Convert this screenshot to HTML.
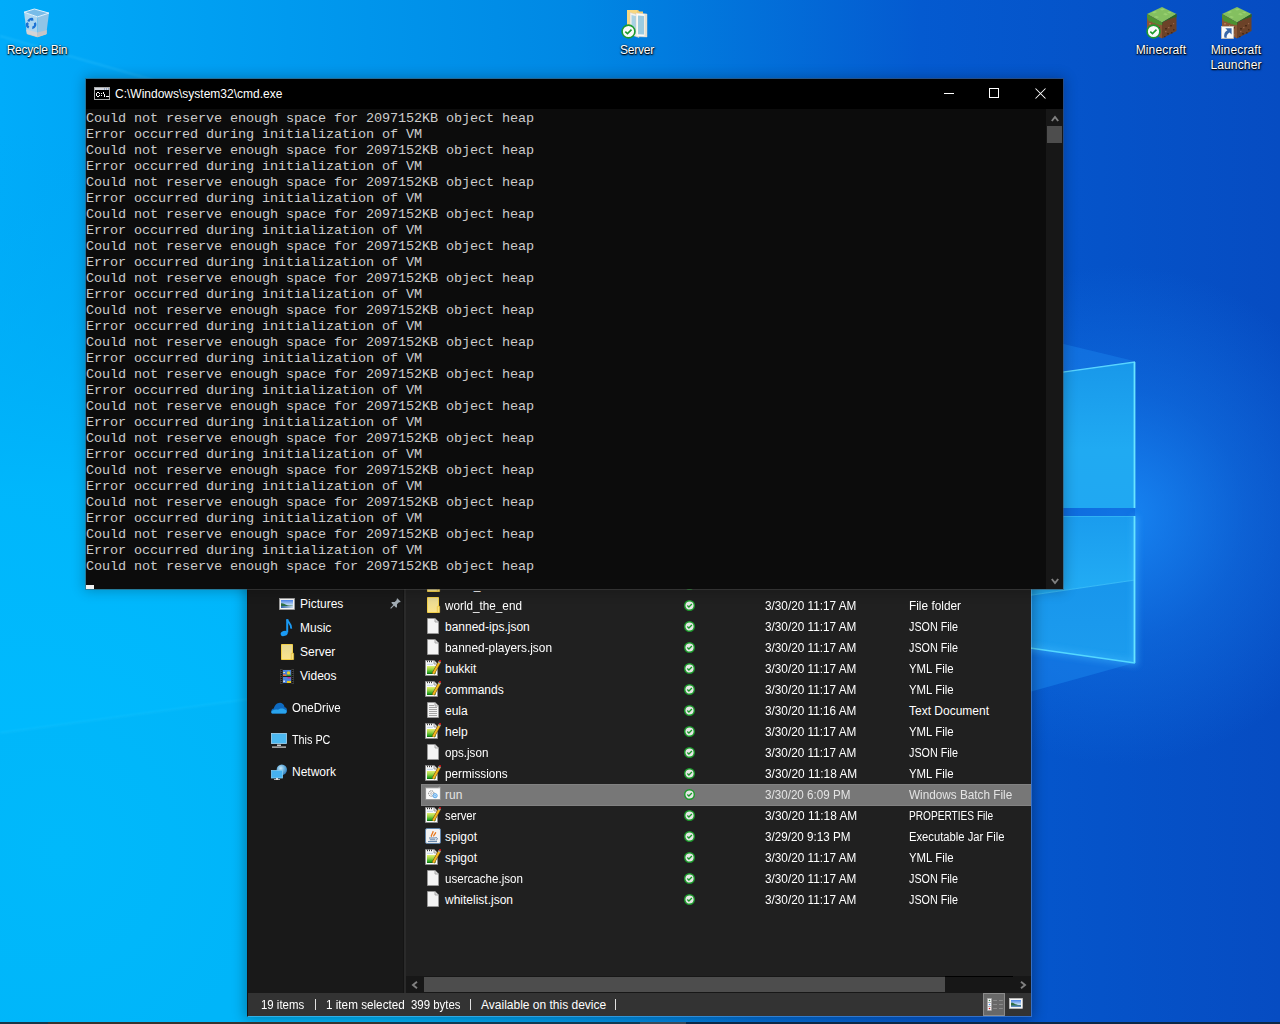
<!DOCTYPE html><html><head><meta charset="utf-8"><style>
*{margin:0;padding:0;box-sizing:border-box}
html,body{width:1280px;height:1024px;overflow:hidden;background:#0060d0}
body{position:relative;font-family:"Liberation Sans",sans-serif;font-size:12px}
svg{display:block}
.a{position:absolute}
.dt{position:absolute;color:#fff;font-size:12px;text-align:center;line-height:15px;white-space:nowrap;letter-spacing:-0.25px;
 text-shadow:0 1px 1px rgba(0,0,0,.95),1px 1px 2px rgba(0,0,0,.75),0 0 2px rgba(0,0,0,.6)}
#cmd{position:absolute;left:86px;top:79px;width:977px;height:510px;background:#0c0c0c;
 box-shadow:0 0 12px 2px rgba(0,0,0,.24)}
#cmdb{position:absolute;left:-1px;top:-1px;width:979px;height:512px;border:1px solid rgba(80,80,80,.45);pointer-events:none}
#cmdtitle{position:absolute;left:0;top:0;width:977px;height:30px;background:#000}
#cmdtitle .t{position:absolute;left:29px;top:8px;color:#fff;font-size:12px;line-height:14px;white-space:nowrap}
#con{position:absolute;left:0px;top:32px;width:960px;height:480px;color:#cccccc;
 font-family:"Liberation Mono",monospace;font-size:13.5px;letter-spacing:-0.1px;line-height:16px;white-space:pre}
#cur{position:absolute;left:0px;top:506px;width:8px;height:4px;background:#f2f2f2}
#vsb{position:absolute;left:960px;top:30px;width:17px;height:480px;background:#171717}
#exp{position:absolute;left:247px;top:560px;width:785px;height:457px;background:transparent;
 box-shadow:0 0 12px 2px rgba(0,0,0,.30)}
#expb{position:absolute;left:0;top:0;width:785px;height:457px;border:1px solid rgba(150,165,190,.32);border-left:1px solid #141212;border-top:0;pointer-events:none}
#cont{position:absolute;left:159px;top:0;width:625px;height:433px;background:#202020}
#nav{position:absolute;left:1px;top:0;width:155px;height:433px;background:#191919}
#split1{position:absolute;left:156px;top:0;width:1px;height:433px;background:#141414}
#split2{position:absolute;left:157px;top:0;width:2px;height:433px;background:#2a2a2a}
.nv{position:absolute;color:#fff;font-size:12px;line-height:14px;white-space:nowrap}
.row{position:absolute;left:174px;width:610px;height:21px;color:#fff;white-space:nowrap;font-size:12px;line-height:14px}
.row .n{position:absolute;left:24px;top:4px}
.row .d{position:absolute;left:344px;top:4px}
.row .ty{position:absolute;left:488px;top:4px}
.row .ck{position:absolute;left:263px;top:5px}
.row .ic{position:absolute;left:4px;top:2px}
.sel{height:22px;color:#e4e4e4;background:#777777;box-shadow:inset 0 1px 0 #828282,inset 0 -1px 0 #828282,inset 1px 0 0 #828282}
#hsb{position:absolute;left:159px;top:416px;width:625px;height:17px;background:#171717}
#status{position:absolute;left:1px;top:433px;width:783px;height:23px;background:#333333;color:#fff;white-space:nowrap;line-height:14px}
#status .s{position:absolute;top:5px}
#status .bar{position:absolute;top:6px;width:1px;height:11px;background:#e0e0e0}
</style></head><body>
<svg class="a" style="left:0;top:0" width="1280" height="1024" viewBox="0 0 1280 1024">
 <defs>
  <linearGradient id="g0" x1="0" y1="0" x2="1280" y2="0" gradientUnits="userSpaceOnUse">
   <stop offset="0" stop-color="#00acfa"/>
   <stop offset="0.45" stop-color="#0088e4"/>
   <stop offset="0.72" stop-color="#045ad0"/>
   <stop offset="1" stop-color="#064cc2"/>
  </linearGradient>
  <radialGradient id="g1" cx="60" cy="850" r="720" gradientUnits="userSpaceOnUse">
   <stop offset="0" stop-color="#00bcfe" stop-opacity="1"/>
   <stop offset="0.5" stop-color="#00b8fc" stop-opacity="0.9"/>
   <stop offset="1" stop-color="#00a8f0" stop-opacity="0"/>
  </radialGradient>
  <radialGradient id="g2" cx="1120" cy="515" r="250" gradientUnits="userSpaceOnUse">
   <stop offset="0" stop-color="#1a8efa" stop-opacity="0.85"/>
   <stop offset="0.5" stop-color="#1a86f4" stop-opacity="0.35"/>
   <stop offset="1" stop-color="#1a80f0" stop-opacity="0"/>
  </radialGradient>
  <filter id="blur1" x="-10%" y="-50%" width="120%" height="200%"><feGaussianBlur stdDeviation="1"/></filter>
  <filter id="blur3" x="-50%" y="-50%" width="200%" height="200%"><feGaussianBlur stdDeviation="3"/></filter>
  <linearGradient id="pane" x1="0" y1="362" x2="0" y2="508" gradientUnits="userSpaceOnUse">
   <stop offset="0" stop-color="#1898ea"/>
   <stop offset="0.6" stop-color="#20aaf2"/>
   <stop offset="1" stop-color="#20a8f2"/>
  </linearGradient>
  <linearGradient id="pane2" x1="0" y1="516" x2="0" y2="590" gradientUnits="userSpaceOnUse">
   <stop offset="0" stop-color="#1a9cee"/>
   <stop offset="1" stop-color="#22acf4"/>
  </linearGradient>
  <linearGradient id="pane3" x1="0" y1="585" x2="0" y2="660" gradientUnits="userSpaceOnUse">
   <stop offset="0" stop-color="#1896ec"/>
   <stop offset="1" stop-color="#1c9cee"/>
  </linearGradient>
 </defs>
 <rect width="1280" height="1024" fill="url(#g0)"/>
 <rect width="1280" height="1024" fill="url(#g1)"/>
 <rect width="1280" height="1024" fill="url(#g2)"/>
 <line x1="0" y1="36" x2="160" y2="82" stroke="#50d0ff" stroke-width="1.5" opacity="0.3" filter="url(#blur1)"/>
 <polygon points="0,733 250,699 250,1024 0,1024" fill="#00aef0" opacity="0.18"/>
 <line x1="0" y1="733" x2="250" y2="699" stroke="#30d0ff" stroke-width="1.5" opacity="0.25" filter="url(#blur1)"/>
 <polygon points="1134,361 800,280 800,409" fill="#1a86ee" opacity="0.45"/>
 <polygon points="1134,663 800,756 800,615" fill="#1a88ee" opacity="0.5"/>
 <polygon points="1135,362 800,409 800,508 1135,508" fill="url(#pane)"/>
 <polygon points="1135,508 800,508 800,516 1135,516" fill="#0a62d6" opacity="0.5"/>
 <polygon points="1135,516 800,516 800,629 1135,580" fill="url(#pane2)"/>
 <polygon points="1135,580 800,629 800,615 1135,663" fill="url(#pane3)"/>
 <line x1="1135" y1="580" x2="800" y2="629" stroke="#40c4fa" stroke-width="1" opacity="0.8"/>
 <polyline points="800,409 1135,362" fill="none" stroke="#58d4ff" stroke-width="1.3"/>
 <polyline points="1135,362 1135,508" fill="none" stroke="#40b8ff" stroke-width="5" opacity="0.55" filter="url(#blur3)"/>
 <polyline points="1135,516 1135,663 800,615" fill="none" stroke="#40b8ff" stroke-width="5" opacity="0.55" filter="url(#blur3)"/>
 <line x1="1134.5" y1="362" x2="1134.5" y2="508" stroke="#68e4ff" stroke-width="1.8"/>
 <line x1="800" y1="516.5" x2="1135" y2="516.5" stroke="#40c0f8" stroke-width="1" opacity="0.6"/>
 <line x1="1134.5" y1="516" x2="1134.5" y2="663" stroke="#68e4ff" stroke-width="1.8"/>
 <line x1="1135" y1="663" x2="800" y2="615" stroke="#54d8ff" stroke-width="1.5"/>
</svg>
<div class="a" style="left:0;top:0"><svg width="74" height="40" viewBox="0 0 74 40" ><path d="M24 12.2L37.5 16.9V36.9L26.9 33.8z" fill="#acd6f0"/>
<path d="M37.5 16.9L49 13.1L46.3 34L37.5 36.9z" fill="#90c4e6"/>
<path d="M24 12.2L34.4 9L49 13.1L37.5 16.9z" fill="#78bce8" stroke="#e4f2fb" stroke-width="1"/>
<path d="M26.1 29.5L37.5 32.5V36.9L26.9 33.8z" fill="#d4d4d6"/>
<path d="M37.5 32.5L46.8 30V34L37.5 36.9z" fill="#c4c4c8"/>
<path d="M26.9 33.8L37.5 36.9L46.3 34" fill="none" stroke="#e8c8b0" stroke-width="0.6"/>
<path d="M28.3 21.5c0.8-2.2 2.8-3 4.6-2.3" stroke="#1a72d4" stroke-width="2.3" fill="none"/>
<path d="M32.2 17.6l1.6 2.6l-2.8 0.8z" fill="#1a72d4"/>
<path d="M28.8 27.5c-1.6-0.8-2.2-2.6-1.6-4.4" stroke="#1a72d4" stroke-width="2.3" fill="none"/>
<path d="M26 24.5l1.3-2.6l1.8 2.4z" fill="#1a72d4"/>
<path d="M34.8 22.8c0.9 1.8 0.4 3.8-1.6 4.8" stroke="#1a72d4" stroke-width="2.3" fill="none"/>
<path d="M32.2 29.2l0.2-3l2.5 1.3z" fill="#1a72d4"/></svg></div>
<div class="dt" style="left:0;top:43px;width:74px">Recycle Bin</div>
<div class="a" style="left:600px;top:0"><svg width="74" height="40" viewBox="0 0 74 40" ><path d="M27 10h11l1.5 1.5H43V30H27z" fill="#f2cc6c"/>
<path d="M27 10h10v20H27z" fill="#f8d880"/>
<path d="M30 12.5l9 2.5v22.5l-9-3z" fill="#f6f4ee" stroke="#d0c8b8" stroke-width="0.5"/>
<path d="M31.5 15l6 1.6v18l-6-2z" fill="#a8d2e4"/>
<path d="M36 13l11 1v23l-11-0.5z" fill="#fbfaf6" stroke="#d4ccbc" stroke-width="0.5"/>
<path d="M38 15.5l6 0.5v18.5l-6-0.3z" fill="#9ccbe0"/>
<path d="M44.5 14.2l2.5-0.2v23l-2.5-0.2z" fill="#e6dfcf"/></svg></div>
<div class="a" style="left:621px;top:24px"><svg width="15" height="15" viewBox="0 0 15 15" ><circle cx="7.5" cy="7.5" r="6.4" fill="#fafafa" stroke="#1e9a2e" stroke-width="1.6"/><path d="M4.3 7.6l2.2 2l4-4" fill="none" stroke="#1e9a2e" stroke-width="1.6"/></svg></div>
<div class="dt" style="left:600px;top:43px;width:74px">Server</div>
<div class="a" style="left:1146px;top:6px"><svg width="32" height="33" viewBox="0 0 32 33" ><path d="M16 1L30.5 8L16 16.5L1 8z" fill="#84c060"/>
<path d="M6 6.5l3-1.5l2 1l-3 1.5zM14 3.5l3-1l2 1l-3 1zM19 7l3 1.2l-2 1.2l-3-1.2zM10 10l3 1l-2 1l-3-1zM23 5.5l2.5 1l-2 1l-2.5-1z" fill="#98d070"/>
<path d="M1 8L16 16.5V32.5L1 25z" fill="#8a5636"/>
<path d="M30.5 8L16 16.5V32.5L30.5 25z" fill="#6c4228"/>
<path d="M1 8L16 16.5V19.5l-1.5-1l-1.2 0.8l-1.8-1.4l-1 0.5l-2-1.6l-1.2 0.4l-1.8-1.6l-1 0.4l-2.2-1.6L1 11z" fill="#4c9232"/>
<path d="M16 16.5L30.5 8V11l-1.5 0.6l-1-0.4l-1.8 1.4l-1-0.3l-2 1.5l-1.3-0.2l-1.8 1.5l-1-0.2l-2.4 1.6L16 19.5z" fill="#246c22"/>
<path d="M3 17h2v1.5H3zM7 21h2v1.5H7zM4 23h1.5v1.5H4zM11 24h2v1.5h-2zM12 28h1.5v1.5H12zM8 19h1v1H8z" fill="#b07a50"/>
<path d="M5 20h1.5v1.5H5zM9 25h1.5v1.5H9zM13 21h1v1.5h-1zM2 21h1v1H2z" fill="#5a3420"/>
<path d="M19 22h2v1.5h-2zM24 19h2v1.5h-2zM27 23h1.5v1.5H27zM21 27h2v1.5h-2zM25 26h1.5v1.5H25zM18 30h1.5v1.2H18z" fill="#4a2a18"/>
<path d="M22 21h1.5v1.2H22zM19 25h1.5v1.2H19zM27 17h1.2v1.2H27z" fill="#94644a"/></svg></div>
<div class="a" style="left:1146px;top:24px"><svg width="15" height="15" viewBox="0 0 15 15" ><circle cx="7.5" cy="7.5" r="6.4" fill="#fafafa" stroke="#1e9a2e" stroke-width="1.6"/><path d="M4.3 7.6l2.2 2l4-4" fill="none" stroke="#1e9a2e" stroke-width="1.6"/></svg></div>
<div class="dt" style="left:1124px;top:43px;width:74px;letter-spacing:0.15px">Minecraft</div>
<div class="a" style="left:1221px;top:6px"><svg width="32" height="33" viewBox="0 0 32 33" ><path d="M16 1L30.5 8L16 16.5L1 8z" fill="#84c060"/>
<path d="M6 6.5l3-1.5l2 1l-3 1.5zM14 3.5l3-1l2 1l-3 1zM19 7l3 1.2l-2 1.2l-3-1.2zM10 10l3 1l-2 1l-3-1zM23 5.5l2.5 1l-2 1l-2.5-1z" fill="#98d070"/>
<path d="M1 8L16 16.5V32.5L1 25z" fill="#8a5636"/>
<path d="M30.5 8L16 16.5V32.5L30.5 25z" fill="#6c4228"/>
<path d="M1 8L16 16.5V19.5l-1.5-1l-1.2 0.8l-1.8-1.4l-1 0.5l-2-1.6l-1.2 0.4l-1.8-1.6l-1 0.4l-2.2-1.6L1 11z" fill="#4c9232"/>
<path d="M16 16.5L30.5 8V11l-1.5 0.6l-1-0.4l-1.8 1.4l-1-0.3l-2 1.5l-1.3-0.2l-1.8 1.5l-1-0.2l-2.4 1.6L16 19.5z" fill="#246c22"/>
<path d="M3 17h2v1.5H3zM7 21h2v1.5H7zM4 23h1.5v1.5H4zM11 24h2v1.5h-2zM12 28h1.5v1.5H12zM8 19h1v1H8z" fill="#b07a50"/>
<path d="M5 20h1.5v1.5H5zM9 25h1.5v1.5H9zM13 21h1v1.5h-1zM2 21h1v1H2z" fill="#5a3420"/>
<path d="M19 22h2v1.5h-2zM24 19h2v1.5h-2zM27 23h1.5v1.5H27zM21 27h2v1.5h-2zM25 26h1.5v1.5H25zM18 30h1.5v1.2H18z" fill="#4a2a18"/>
<path d="M22 21h1.5v1.2H22zM19 25h1.5v1.2H19zM27 17h1.2v1.2H27z" fill="#94644a"/></svg></div>
<div class="a" style="left:1221px;top:26px"><svg width="13" height="13" viewBox="0 0 13 13" ><rect x="0.5" y="0.5" width="12" height="12" fill="#fafafa" stroke="#c8c0b4" stroke-width="0.8"/><path d="M4.3 2.2H10.6V8.4L8.6 6.4C6.4 7.6 5.4 9.2 5.6 11.9L3.3 11.6C2.7 8.2 3.8 5.6 6.4 4.3z" fill="#3a68a8"/></svg></div>
<div class="dt" style="left:1199px;top:43px;width:74px;letter-spacing:0.15px">Minecraft<br>Launcher</div>
<div id="exp">
<div id="cont"></div><div id="nav"></div><div id="split1"></div><div id="split2"></div>
<div class="a" style="left:32px;top:36px"><svg width="16" height="16" viewBox="0 0 16 16" ><defs><linearGradient id="sky" x1="0" y1="0" x2="0" y2="1"><stop offset="0" stop-color="#4a84e8"/><stop offset="0.7" stop-color="#d4e8f6"/></linearGradient><linearGradient id="wat" x1="0" y1="0" x2="1" y2="0"><stop offset="0" stop-color="#2e64a8"/><stop offset="1" stop-color="#c8dcec"/></linearGradient></defs><rect x="0.5" y="2.5" width="15" height="11" fill="#f4f4f4" stroke="#a0a0a0" stroke-width="0.8"/><rect x="2" y="4" width="12" height="8" fill="url(#sky)"/><path d="M2 7.2c2-0.3 3.5 0.5 5 1.6c2 0.8 4 0.8 7 1V10.5H2z" fill="#2e6e44"/><rect x="2" y="10" width="12" height="2" fill="url(#wat)"/></svg></div>
<div class="nv" style="left:53px;top:37px;">Pictures</div>
<div class="a" style="left:32px;top:58px"><svg width="16" height="19" viewBox="0 0 16 19" ><path d="M8.2 1.2v13.3" stroke="#1a9af4" stroke-width="2"/><ellipse cx="5.2" cy="15.4" rx="3.6" ry="2.5" transform="rotate(-20 5.2 15.4)" fill="#1a9af4"/><path d="M8.2 1.5c0.6 3.2 4.5 4 4 9.2" stroke="#1a9af4" stroke-width="2" fill="none"/></svg></div>
<div class="nv" style="left:53px;top:61px;">Music</div>
<div class="a" style="left:32px;top:84px"><svg width="16" height="16" viewBox="0 0 16 16" ><defs><linearGradient id="fg" x1="0" y1="0" x2="0" y2="1"><stop offset="0" stop-color="#e6d894"/><stop offset="1" stop-color="#fae48c"/></linearGradient></defs><path d="M2.5 0.5h11v15h-11z" fill="url(#fg)" stroke="#f2cf48" stroke-width="1"/><path d="M12.3 9.3h2.3v6.2h-2.3z" fill="#fae27c" stroke="#e8c444" stroke-width="0.8"/></svg></div>
<div class="nv" style="left:53px;top:85px;">Server</div>
<div class="a" style="left:32px;top:108px"><svg width="16" height="17" viewBox="0 0 16 17" ><rect x="1" y="1" width="14" height="15" fill="#202020"/><rect x="1" y="1" width="2.5" height="15" fill="#3e3e3e"/><rect x="12.5" y="1" width="2.5" height="15" fill="#3e3e3e"/><g fill="#0a0a0a"><rect x="1.7" y="2" width="1.2" height="1"/><rect x="1.7" y="4" width="1.2" height="1"/><rect x="1.7" y="6" width="1.2" height="1"/><rect x="1.7" y="8" width="1.2" height="1"/><rect x="1.7" y="10" width="1.2" height="1"/><rect x="1.7" y="12" width="1.2" height="1"/><rect x="1.7" y="14" width="1.2" height="1"/><rect x="13.1" y="2" width="1.2" height="1"/><rect x="13.1" y="4" width="1.2" height="1"/><rect x="13.1" y="6" width="1.2" height="1"/><rect x="13.1" y="8" width="1.2" height="1"/><rect x="13.1" y="10" width="1.2" height="1"/><rect x="13.1" y="12" width="1.2" height="1"/><rect x="13.1" y="14" width="1.2" height="1"/></g><rect x="4" y="2" width="8" height="6" fill="#4a82dc"/><rect x="4" y="9" width="8" height="6" fill="#4a82dc"/><circle cx="9.6" cy="5" r="1.7" fill="#e8d020"/><rect x="4" y="6.5" width="3.5" height="1.5" fill="#f06a30"/><rect x="7.5" y="6.8" width="4.5" height="1.2" fill="#2a9a3a"/><rect x="4.2" y="4" width="1.8" height="1" fill="#e0e0a0"/><rect x="8" y="13" width="4" height="2" fill="#e8c818"/><rect x="8.5" y="9" width="3" height="1.5" fill="#c02a9a"/><rect x="4.2" y="12.5" width="1.8" height="1.5" fill="#d8e0e8"/></svg></div>
<div class="nv" style="left:53px;top:109px;">Videos</div>
<div class="a" style="left:24px;top:142px"><svg width="16" height="12" viewBox="0 0 16 12" ><path d="M1.5 11.5C-0.5 11.3-0.2 6.8 2.8 6.6C3.4 3.6 5.8 0.6 9.2 0.7C11.8 0.9 13.2 2.8 13.6 5.3C15.6 5.5 16.4 7.8 15.9 9.4C15.6 10.8 14.6 11.5 13.6 11.5z" fill="#0e6ac0"/><path d="M1.5 11.5C0 11.4-0.2 9.2 1.6 8.4C3.2 7.6 5.2 7.4 7 7.8C9 6.2 12.2 6 14.2 7.8C15.8 8.4 16.2 10.6 14.6 11.5z" fill="#29a3ec"/></svg></div>
<div class="nv" style="left:45px;top:141px;transform:scaleX(0.96);transform-origin:0 0;">OneDrive</div>
<div class="a" style="left:24px;top:172px"><svg width="16" height="16" viewBox="0 0 16 16" ><rect x="0.5" y="1.5" width="15" height="10" fill="#4cb8f0" stroke="#a8d8f4" stroke-width="0.8"/><path d="M6 12.5h4v1.5H6z" fill="#c8c8c8"/><path d="M1 14.5h14v1.2H1z" fill="#d8d8d8"/></svg></div>
<div class="nv" style="left:45px;top:173px;transform:scaleX(0.9);transform-origin:0 0;">This PC</div>
<div class="a" style="left:24px;top:204px"><svg width="16" height="16" viewBox="0 0 16 16" ><defs><radialGradient id="gl" cx="0.4" cy="0.35" r="0.7"><stop offset="0" stop-color="#c8e8f8"/><stop offset="0.5" stop-color="#6ab0dc"/><stop offset="1" stop-color="#2a78b8"/></radialGradient></defs><circle cx="10.8" cy="5.8" r="5.2" fill="url(#gl)"/><rect x="0.5" y="6.5" width="11" height="7.5" fill="#46b2f0" stroke="#80ccf4" stroke-width="0.8"/><path d="M5 14h2v1.2H5zM3 15.2h6v0.8H3z" fill="#d8d8d8"/></svg></div>
<div class="nv" style="left:45px;top:205px;">Network</div>
<div class="a" style="left:142px;top:38px"><svg width="12" height="12" viewBox="0 0 12 12" ><g transform="rotate(45 6 6)" fill="#a2acb4"><path d="M3.6 0.3h4.8v1.3h-0.8v3.2l1.9 1.9v1.1h-7v-1.1l1.9-1.9v-3.2h-0.8z"/><rect x="5.5" y="7.6" width="1" height="4.6"/></g></svg></div>
<div class="row" style="top:14px"><div class="ic"><svg width="16" height="16" viewBox="0 0 16 16" ><defs><linearGradient id="fg" x1="0" y1="0" x2="0" y2="1"><stop offset="0" stop-color="#e6d894"/><stop offset="1" stop-color="#fae48c"/></linearGradient></defs><path d="M2.5 0.5h11v15h-11z" fill="url(#fg)" stroke="#f2cf48" stroke-width="1"/><path d="M12.3 9.3h2.3v6.2h-2.3z" fill="#fae27c" stroke="#e8c444" stroke-width="0.8"/></svg></div><span class="n" style="">world_nether</span><div class="ck"><svg width="11" height="11" viewBox="0 0 11 11" ><circle cx="5.5" cy="5.5" r="4.8" fill="#e6e6e6" stroke="#1a9a2a" stroke-width="1.4"/><path d="M3.3 5.6l1.6 1.4l3-3" fill="none" stroke="#1a9a2a" stroke-width="1.3"/></svg></div><span class="d" style="transform:scaleX(0.98);transform-origin:0 0;">3/30/20 11:17 AM</span><span class="ty" style="transform:scaleX(0.987);transform-origin:0 0;">File folder</span></div>
<div class="row" style="top:35px"><div class="ic"><svg width="16" height="16" viewBox="0 0 16 16" ><defs><linearGradient id="fg" x1="0" y1="0" x2="0" y2="1"><stop offset="0" stop-color="#e6d894"/><stop offset="1" stop-color="#fae48c"/></linearGradient></defs><path d="M2.5 0.5h11v15h-11z" fill="url(#fg)" stroke="#f2cf48" stroke-width="1"/><path d="M12.3 9.3h2.3v6.2h-2.3z" fill="#fae27c" stroke="#e8c444" stroke-width="0.8"/></svg></div><span class="n" style="transform:scaleX(0.977);transform-origin:0 0;">world_the_end</span><div class="ck"><svg width="11" height="11" viewBox="0 0 11 11" ><circle cx="5.5" cy="5.5" r="4.8" fill="#e6e6e6" stroke="#1a9a2a" stroke-width="1.4"/><path d="M3.3 5.6l1.6 1.4l3-3" fill="none" stroke="#1a9a2a" stroke-width="1.3"/></svg></div><span class="d" style="transform:scaleX(0.98);transform-origin:0 0;">3/30/20 11:17 AM</span><span class="ty" style="transform:scaleX(0.987);transform-origin:0 0;">File folder</span></div>
<div class="row" style="top:56px"><div class="ic"><svg width="16" height="16" viewBox="0 0 16 16" ><path d="M2.5 0.5h7.5l3.5 3.5v11.5h-11z" fill="#f4f4f4" stroke="#9a9a9a" stroke-width="0.8"/><path d="M10 0.5v3.5h3.5" fill="#e0e0e0" stroke="#9a9a9a" stroke-width="0.8"/></svg></div><span class="n" style="">banned-ips.json</span><div class="ck"><svg width="11" height="11" viewBox="0 0 11 11" ><circle cx="5.5" cy="5.5" r="4.8" fill="#e6e6e6" stroke="#1a9a2a" stroke-width="1.4"/><path d="M3.3 5.6l1.6 1.4l3-3" fill="none" stroke="#1a9a2a" stroke-width="1.3"/></svg></div><span class="d" style="transform:scaleX(0.98);transform-origin:0 0;">3/30/20 11:17 AM</span><span class="ty" style="transform:scaleX(0.896);transform-origin:0 0;">JSON File</span></div>
<div class="row" style="top:77px"><div class="ic"><svg width="16" height="16" viewBox="0 0 16 16" ><path d="M2.5 0.5h7.5l3.5 3.5v11.5h-11z" fill="#f4f4f4" stroke="#9a9a9a" stroke-width="0.8"/><path d="M10 0.5v3.5h3.5" fill="#e0e0e0" stroke="#9a9a9a" stroke-width="0.8"/></svg></div><span class="n" style="transform:scaleX(0.99);transform-origin:0 0;">banned-players.json</span><div class="ck"><svg width="11" height="11" viewBox="0 0 11 11" ><circle cx="5.5" cy="5.5" r="4.8" fill="#e6e6e6" stroke="#1a9a2a" stroke-width="1.4"/><path d="M3.3 5.6l1.6 1.4l3-3" fill="none" stroke="#1a9a2a" stroke-width="1.3"/></svg></div><span class="d" style="transform:scaleX(0.98);transform-origin:0 0;">3/30/20 11:17 AM</span><span class="ty" style="transform:scaleX(0.896);transform-origin:0 0;">JSON File</span></div>
<div class="row" style="top:98px"><div class="ic"><svg width="16" height="16" viewBox="0 0 16 16" ><defs><linearGradient id="ng" x1="0" y1="0" x2="0" y2="1"><stop offset="0" stop-color="#e4f070"/><stop offset="0.45" stop-color="#90d040"/><stop offset="0.85" stop-color="#20a020"/><stop offset="1" stop-color="#0a5a0a"/></linearGradient></defs><path d="M0.5 0.5H9L12.5 4V15.5H0.5z" fill="#fafafa" stroke="#8c8c8c" stroke-width="0.9"/><path d="M9 0.5V4H12.5" fill="#e4e4e4" stroke="#8c8c8c" stroke-width="0.8"/><rect x="2" y="0.6" width="1" height="1.6" fill="#3a3a3a"/><rect x="4" y="0.6" width="1" height="1.6" fill="#3a3a3a"/><rect x="6" y="0.6" width="1" height="1.6" fill="#3a3a3a"/><path d="M2 4.3h6" stroke="#a8c4e0" stroke-width="0.7"/><rect x="2" y="6" width="8.5" height="8" fill="url(#ng)"/><path d="M8.2 13.8L14.6 2" stroke="#6a4a10" stroke-width="3"/><path d="M8.2 13.8L14.6 2" stroke="#f4b820" stroke-width="2"/><path d="M14 3L15.2 0.9" stroke="#98a8b8" stroke-width="2.2"/><circle cx="15.1" cy="0.9" r="1" fill="#c81010"/></svg></div><span class="n" style="">bukkit</span><div class="ck"><svg width="11" height="11" viewBox="0 0 11 11" ><circle cx="5.5" cy="5.5" r="4.8" fill="#e6e6e6" stroke="#1a9a2a" stroke-width="1.4"/><path d="M3.3 5.6l1.6 1.4l3-3" fill="none" stroke="#1a9a2a" stroke-width="1.3"/></svg></div><span class="d" style="transform:scaleX(0.98);transform-origin:0 0;">3/30/20 11:17 AM</span><span class="ty" style="transform:scaleX(0.95);transform-origin:0 0;">YML File</span></div>
<div class="row" style="top:119px"><div class="ic"><svg width="16" height="16" viewBox="0 0 16 16" ><defs><linearGradient id="ng" x1="0" y1="0" x2="0" y2="1"><stop offset="0" stop-color="#e4f070"/><stop offset="0.45" stop-color="#90d040"/><stop offset="0.85" stop-color="#20a020"/><stop offset="1" stop-color="#0a5a0a"/></linearGradient></defs><path d="M0.5 0.5H9L12.5 4V15.5H0.5z" fill="#fafafa" stroke="#8c8c8c" stroke-width="0.9"/><path d="M9 0.5V4H12.5" fill="#e4e4e4" stroke="#8c8c8c" stroke-width="0.8"/><rect x="2" y="0.6" width="1" height="1.6" fill="#3a3a3a"/><rect x="4" y="0.6" width="1" height="1.6" fill="#3a3a3a"/><rect x="6" y="0.6" width="1" height="1.6" fill="#3a3a3a"/><path d="M2 4.3h6" stroke="#a8c4e0" stroke-width="0.7"/><rect x="2" y="6" width="8.5" height="8" fill="url(#ng)"/><path d="M8.2 13.8L14.6 2" stroke="#6a4a10" stroke-width="3"/><path d="M8.2 13.8L14.6 2" stroke="#f4b820" stroke-width="2"/><path d="M14 3L15.2 0.9" stroke="#98a8b8" stroke-width="2.2"/><circle cx="15.1" cy="0.9" r="1" fill="#c81010"/></svg></div><span class="n" style="">commands</span><div class="ck"><svg width="11" height="11" viewBox="0 0 11 11" ><circle cx="5.5" cy="5.5" r="4.8" fill="#e6e6e6" stroke="#1a9a2a" stroke-width="1.4"/><path d="M3.3 5.6l1.6 1.4l3-3" fill="none" stroke="#1a9a2a" stroke-width="1.3"/></svg></div><span class="d" style="transform:scaleX(0.98);transform-origin:0 0;">3/30/20 11:17 AM</span><span class="ty" style="transform:scaleX(0.95);transform-origin:0 0;">YML File</span></div>
<div class="row" style="top:140px"><div class="ic"><svg width="16" height="16" viewBox="0 0 16 16" ><path d="M2.5 0.5h7.5l3.5 3.5v11.5h-11z" fill="#f4f4f4" stroke="#9a9a9a" stroke-width="0.8"/><path d="M10 0.5v3.5h3.5" fill="#e0e0e0" stroke="#9a9a9a" stroke-width="0.8"/><path d="M4 3.5h5M4 5.5h8M4 7.5h8M4 9.5h8M4 11.5h8M4 13.5h8" stroke="#9a9a9a" stroke-width="0.9"/></svg></div><span class="n" style="">eula</span><div class="ck"><svg width="11" height="11" viewBox="0 0 11 11" ><circle cx="5.5" cy="5.5" r="4.8" fill="#e6e6e6" stroke="#1a9a2a" stroke-width="1.4"/><path d="M3.3 5.6l1.6 1.4l3-3" fill="none" stroke="#1a9a2a" stroke-width="1.3"/></svg></div><span class="d" style="transform:scaleX(0.98);transform-origin:0 0;">3/30/20 11:16 AM</span><span class="ty" style="">Text Document</span></div>
<div class="row" style="top:161px"><div class="ic"><svg width="16" height="16" viewBox="0 0 16 16" ><defs><linearGradient id="ng" x1="0" y1="0" x2="0" y2="1"><stop offset="0" stop-color="#e4f070"/><stop offset="0.45" stop-color="#90d040"/><stop offset="0.85" stop-color="#20a020"/><stop offset="1" stop-color="#0a5a0a"/></linearGradient></defs><path d="M0.5 0.5H9L12.5 4V15.5H0.5z" fill="#fafafa" stroke="#8c8c8c" stroke-width="0.9"/><path d="M9 0.5V4H12.5" fill="#e4e4e4" stroke="#8c8c8c" stroke-width="0.8"/><rect x="2" y="0.6" width="1" height="1.6" fill="#3a3a3a"/><rect x="4" y="0.6" width="1" height="1.6" fill="#3a3a3a"/><rect x="6" y="0.6" width="1" height="1.6" fill="#3a3a3a"/><path d="M2 4.3h6" stroke="#a8c4e0" stroke-width="0.7"/><rect x="2" y="6" width="8.5" height="8" fill="url(#ng)"/><path d="M8.2 13.8L14.6 2" stroke="#6a4a10" stroke-width="3"/><path d="M8.2 13.8L14.6 2" stroke="#f4b820" stroke-width="2"/><path d="M14 3L15.2 0.9" stroke="#98a8b8" stroke-width="2.2"/><circle cx="15.1" cy="0.9" r="1" fill="#c81010"/></svg></div><span class="n" style="">help</span><div class="ck"><svg width="11" height="11" viewBox="0 0 11 11" ><circle cx="5.5" cy="5.5" r="4.8" fill="#e6e6e6" stroke="#1a9a2a" stroke-width="1.4"/><path d="M3.3 5.6l1.6 1.4l3-3" fill="none" stroke="#1a9a2a" stroke-width="1.3"/></svg></div><span class="d" style="transform:scaleX(0.98);transform-origin:0 0;">3/30/20 11:17 AM</span><span class="ty" style="transform:scaleX(0.95);transform-origin:0 0;">YML File</span></div>
<div class="row" style="top:182px"><div class="ic"><svg width="16" height="16" viewBox="0 0 16 16" ><path d="M2.5 0.5h7.5l3.5 3.5v11.5h-11z" fill="#f4f4f4" stroke="#9a9a9a" stroke-width="0.8"/><path d="M10 0.5v3.5h3.5" fill="#e0e0e0" stroke="#9a9a9a" stroke-width="0.8"/></svg></div><span class="n" style="transform:scaleX(0.97);transform-origin:0 0;">ops.json</span><div class="ck"><svg width="11" height="11" viewBox="0 0 11 11" ><circle cx="5.5" cy="5.5" r="4.8" fill="#e6e6e6" stroke="#1a9a2a" stroke-width="1.4"/><path d="M3.3 5.6l1.6 1.4l3-3" fill="none" stroke="#1a9a2a" stroke-width="1.3"/></svg></div><span class="d" style="transform:scaleX(0.98);transform-origin:0 0;">3/30/20 11:17 AM</span><span class="ty" style="transform:scaleX(0.896);transform-origin:0 0;">JSON File</span></div>
<div class="row" style="top:203px"><div class="ic"><svg width="16" height="16" viewBox="0 0 16 16" ><defs><linearGradient id="ng" x1="0" y1="0" x2="0" y2="1"><stop offset="0" stop-color="#e4f070"/><stop offset="0.45" stop-color="#90d040"/><stop offset="0.85" stop-color="#20a020"/><stop offset="1" stop-color="#0a5a0a"/></linearGradient></defs><path d="M0.5 0.5H9L12.5 4V15.5H0.5z" fill="#fafafa" stroke="#8c8c8c" stroke-width="0.9"/><path d="M9 0.5V4H12.5" fill="#e4e4e4" stroke="#8c8c8c" stroke-width="0.8"/><rect x="2" y="0.6" width="1" height="1.6" fill="#3a3a3a"/><rect x="4" y="0.6" width="1" height="1.6" fill="#3a3a3a"/><rect x="6" y="0.6" width="1" height="1.6" fill="#3a3a3a"/><path d="M2 4.3h6" stroke="#a8c4e0" stroke-width="0.7"/><rect x="2" y="6" width="8.5" height="8" fill="url(#ng)"/><path d="M8.2 13.8L14.6 2" stroke="#6a4a10" stroke-width="3"/><path d="M8.2 13.8L14.6 2" stroke="#f4b820" stroke-width="2"/><path d="M14 3L15.2 0.9" stroke="#98a8b8" stroke-width="2.2"/><circle cx="15.1" cy="0.9" r="1" fill="#c81010"/></svg></div><span class="n" style="transform:scaleX(0.98);transform-origin:0 0;">permissions</span><div class="ck"><svg width="11" height="11" viewBox="0 0 11 11" ><circle cx="5.5" cy="5.5" r="4.8" fill="#e6e6e6" stroke="#1a9a2a" stroke-width="1.4"/><path d="M3.3 5.6l1.6 1.4l3-3" fill="none" stroke="#1a9a2a" stroke-width="1.3"/></svg></div><span class="d" style="transform:scaleX(0.99);transform-origin:0 0;">3/30/20 11:18 AM</span><span class="ty" style="transform:scaleX(0.95);transform-origin:0 0;">YML File</span></div>
<div class="row sel" style="top:224px"><div class="ic"><svg width="16" height="16" viewBox="0 0 16 16" ><rect x="0.5" y="1.5" width="15" height="12.2" fill="#dcdcdc" stroke="#8a8a8a" stroke-width="0.8"/><rect x="1.3" y="3" width="13.4" height="10" fill="#fbfbfb"/><path d="M13.2 1.5l1.3-1.1v1.1z" fill="#e0e0e0"/><circle cx="6.3" cy="7.5" r="2.7" fill="none" stroke="#6a6a6a" stroke-width="1" stroke-dasharray="1.1 0.8"/><circle cx="6.3" cy="7.5" r="0.9" fill="none" stroke="#9a9a9a" stroke-width="0.6"/><circle cx="10.1" cy="9.7" r="2.1" fill="#c4e2fa" stroke="#58a6ea" stroke-width="1"/><circle cx="10.1" cy="9.7" r="0.7" fill="#58a6ea"/></svg></div><span class="n" style="">run</span><div class="ck"><svg width="11" height="11" viewBox="0 0 11 11" ><circle cx="5.5" cy="5.5" r="4.8" fill="#e6e6e6" stroke="#1a9a2a" stroke-width="1.4"/><path d="M3.3 5.6l1.6 1.4l3-3" fill="none" stroke="#1a9a2a" stroke-width="1.3"/></svg></div><span class="d" style="transform:scaleX(0.97);transform-origin:0 0;">3/30/20 6:09 PM</span><span class="ty" style="transform:scaleX(0.98);transform-origin:0 0;">Windows Batch File</span></div>
<div class="row" style="top:245px"><div class="ic"><svg width="16" height="16" viewBox="0 0 16 16" ><defs><linearGradient id="ng" x1="0" y1="0" x2="0" y2="1"><stop offset="0" stop-color="#e4f070"/><stop offset="0.45" stop-color="#90d040"/><stop offset="0.85" stop-color="#20a020"/><stop offset="1" stop-color="#0a5a0a"/></linearGradient></defs><path d="M0.5 0.5H9L12.5 4V15.5H0.5z" fill="#fafafa" stroke="#8c8c8c" stroke-width="0.9"/><path d="M9 0.5V4H12.5" fill="#e4e4e4" stroke="#8c8c8c" stroke-width="0.8"/><rect x="2" y="0.6" width="1" height="1.6" fill="#3a3a3a"/><rect x="4" y="0.6" width="1" height="1.6" fill="#3a3a3a"/><rect x="6" y="0.6" width="1" height="1.6" fill="#3a3a3a"/><path d="M2 4.3h6" stroke="#a8c4e0" stroke-width="0.7"/><rect x="2" y="6" width="8.5" height="8" fill="url(#ng)"/><path d="M8.2 13.8L14.6 2" stroke="#6a4a10" stroke-width="3"/><path d="M8.2 13.8L14.6 2" stroke="#f4b820" stroke-width="2"/><path d="M14 3L15.2 0.9" stroke="#98a8b8" stroke-width="2.2"/><circle cx="15.1" cy="0.9" r="1" fill="#c81010"/></svg></div><span class="n" style="transform:scaleX(0.94);transform-origin:0 0;">server</span><div class="ck"><svg width="11" height="11" viewBox="0 0 11 11" ><circle cx="5.5" cy="5.5" r="4.8" fill="#e6e6e6" stroke="#1a9a2a" stroke-width="1.4"/><path d="M3.3 5.6l1.6 1.4l3-3" fill="none" stroke="#1a9a2a" stroke-width="1.3"/></svg></div><span class="d" style="transform:scaleX(0.99);transform-origin:0 0;">3/30/20 11:18 AM</span><span class="ty" style="transform:scaleX(0.844);transform-origin:0 0;">PROPERTIES File</span></div>
<div class="row" style="top:266px"><div class="ic"><svg width="16" height="16" viewBox="0 0 16 16" ><rect x="0.5" y="0.5" width="15" height="15" rx="1.5" fill="#f2f2f2" stroke="#5e80a4" stroke-width="1"/><path d="M6.6 8.8c-1.6-1.8 2-3.2 1.4-5.6M8.8 8.4c-1-1.4 2.2-2.2 1.8-4.2" stroke="#e8761a" stroke-width="1.3" fill="none"/><path d="M4 10h6.5M4.8 11.8h5.4M3 13.6h9" stroke="#5a7ea6" stroke-width="1"/><path d="M10.5 9.6c2.4-0.4 2.4 2.4 0.2 2.6" stroke="#5a7ea6" stroke-width="1" fill="none"/></svg></div><span class="n" style="">spigot</span><div class="ck"><svg width="11" height="11" viewBox="0 0 11 11" ><circle cx="5.5" cy="5.5" r="4.8" fill="#e6e6e6" stroke="#1a9a2a" stroke-width="1.4"/><path d="M3.3 5.6l1.6 1.4l3-3" fill="none" stroke="#1a9a2a" stroke-width="1.3"/></svg></div><span class="d" style="transform:scaleX(0.97);transform-origin:0 0;">3/29/20 9:13 PM</span><span class="ty" style="transform:scaleX(0.935);transform-origin:0 0;">Executable Jar File</span></div>
<div class="row" style="top:287px"><div class="ic"><svg width="16" height="16" viewBox="0 0 16 16" ><defs><linearGradient id="ng" x1="0" y1="0" x2="0" y2="1"><stop offset="0" stop-color="#e4f070"/><stop offset="0.45" stop-color="#90d040"/><stop offset="0.85" stop-color="#20a020"/><stop offset="1" stop-color="#0a5a0a"/></linearGradient></defs><path d="M0.5 0.5H9L12.5 4V15.5H0.5z" fill="#fafafa" stroke="#8c8c8c" stroke-width="0.9"/><path d="M9 0.5V4H12.5" fill="#e4e4e4" stroke="#8c8c8c" stroke-width="0.8"/><rect x="2" y="0.6" width="1" height="1.6" fill="#3a3a3a"/><rect x="4" y="0.6" width="1" height="1.6" fill="#3a3a3a"/><rect x="6" y="0.6" width="1" height="1.6" fill="#3a3a3a"/><path d="M2 4.3h6" stroke="#a8c4e0" stroke-width="0.7"/><rect x="2" y="6" width="8.5" height="8" fill="url(#ng)"/><path d="M8.2 13.8L14.6 2" stroke="#6a4a10" stroke-width="3"/><path d="M8.2 13.8L14.6 2" stroke="#f4b820" stroke-width="2"/><path d="M14 3L15.2 0.9" stroke="#98a8b8" stroke-width="2.2"/><circle cx="15.1" cy="0.9" r="1" fill="#c81010"/></svg></div><span class="n" style="">spigot</span><div class="ck"><svg width="11" height="11" viewBox="0 0 11 11" ><circle cx="5.5" cy="5.5" r="4.8" fill="#e6e6e6" stroke="#1a9a2a" stroke-width="1.4"/><path d="M3.3 5.6l1.6 1.4l3-3" fill="none" stroke="#1a9a2a" stroke-width="1.3"/></svg></div><span class="d" style="transform:scaleX(0.98);transform-origin:0 0;">3/30/20 11:17 AM</span><span class="ty" style="transform:scaleX(0.95);transform-origin:0 0;">YML File</span></div>
<div class="row" style="top:308px"><div class="ic"><svg width="16" height="16" viewBox="0 0 16 16" ><path d="M2.5 0.5h7.5l3.5 3.5v11.5h-11z" fill="#f4f4f4" stroke="#9a9a9a" stroke-width="0.8"/><path d="M10 0.5v3.5h3.5" fill="#e0e0e0" stroke="#9a9a9a" stroke-width="0.8"/></svg></div><span class="n" style="transform:scaleX(0.966);transform-origin:0 0;">usercache.json</span><div class="ck"><svg width="11" height="11" viewBox="0 0 11 11" ><circle cx="5.5" cy="5.5" r="4.8" fill="#e6e6e6" stroke="#1a9a2a" stroke-width="1.4"/><path d="M3.3 5.6l1.6 1.4l3-3" fill="none" stroke="#1a9a2a" stroke-width="1.3"/></svg></div><span class="d" style="transform:scaleX(0.98);transform-origin:0 0;">3/30/20 11:17 AM</span><span class="ty" style="transform:scaleX(0.896);transform-origin:0 0;">JSON File</span></div>
<div class="row" style="top:329px"><div class="ic"><svg width="16" height="16" viewBox="0 0 16 16" ><path d="M2.5 0.5h7.5l3.5 3.5v11.5h-11z" fill="#f4f4f4" stroke="#9a9a9a" stroke-width="0.8"/><path d="M10 0.5v3.5h3.5" fill="#e0e0e0" stroke="#9a9a9a" stroke-width="0.8"/></svg></div><span class="n" style="">whitelist.json</span><div class="ck"><svg width="11" height="11" viewBox="0 0 11 11" ><circle cx="5.5" cy="5.5" r="4.8" fill="#e6e6e6" stroke="#1a9a2a" stroke-width="1.4"/><path d="M3.3 5.6l1.6 1.4l3-3" fill="none" stroke="#1a9a2a" stroke-width="1.3"/></svg></div><span class="d" style="transform:scaleX(0.98);transform-origin:0 0;">3/30/20 11:17 AM</span><span class="ty" style="transform:scaleX(0.896);transform-origin:0 0;">JSON File</span></div>
<div id="hsb"><div class="a" style="left:0;top:0;width:17px;height:17px"></div><div class="a" style="left:18px;top:1px;width:521px;height:15px;background:#4d4d4d"></div><div class="a" style="left:539px;top:0;width:68px;height:1px;background:#000"></div><div class="a" style="left:5px;top:5px"><svg width="7" height="8" viewBox="0 0 7 8" ><path d="M6 0.8L2 4L6 7.2" fill="none" stroke="#808080" stroke-width="1.9"/></svg></div><div class="a" style="left:614px;top:5px"><svg width="7" height="8" viewBox="0 0 7 8" ><path d="M1 0.8L5 4L1 7.2" fill="none" stroke="#808080" stroke-width="1.9"/></svg></div></div>
<div id="status">
<span class="s" style="left:13px;transform:scaleX(0.95);transform-origin:0 0;">19 items</span><span class="bar" style="left:67px"></span>
<span class="s" style="left:78px;transform:scaleX(0.976);transform-origin:0 0;">1 item selected</span><span class="s" style="left:163px;transform:scaleX(0.95);transform-origin:0 0;">399 bytes</span><span class="bar" style="left:222px"></span>
<span class="s" style="left:233px">Available on this device</span><span class="bar" style="left:367px"></span>
<div class="a" style="left:735px;top:0"><svg width="22" height="23" viewBox="0 0 22 23" ><rect x="0.5" y="0.5" width="21" height="22" fill="#686868" stroke="#8c8c8c" stroke-width="1"/><rect x="4.5" y="5.5" width="4" height="4" fill="#fafafa" stroke="#a0a0a0" stroke-width="0.6"/><rect x="4.5" y="9.5" width="4" height="4" fill="#fafafa" stroke="#a0a0a0" stroke-width="0.6"/><rect x="4.5" y="13.5" width="4" height="4" fill="#fafafa" stroke="#a0a0a0" stroke-width="0.6"/><circle cx="6.5" cy="7.5" r="0.8" fill="#3a7a4a"/><circle cx="6.5" cy="11.5" r="0.8" fill="#4a8af0"/><circle cx="6.5" cy="15.5" r="0.8" fill="#d02020"/><path d="M10.2 7.5h3.8M16 7.5h3.8M10.2 11.5h3.8M16 11.5h3.8M10.2 15.5h3.8M16 15.5h3.8" stroke="#8e8e8e" stroke-width="0.9"/></svg></div>
<div class="a" style="left:761px;top:5px"><svg width="14" height="11" viewBox="0 0 14 11" ><defs><linearGradient id="vsk" x1="0" y1="0" x2="0" y2="1"><stop offset="0" stop-color="#4a84e8"/><stop offset="0.7" stop-color="#d4e8f6"/></linearGradient></defs><rect x="0.5" y="0.5" width="13" height="10" fill="#f6f6f6" stroke="#d0d0d0" stroke-width="0.6"/><rect x="2" y="2" width="10" height="7" fill="url(#vsk)"/><path d="M2 4.8c2-0.3 3 0.5 4.5 1.5c2 0.6 3.5 0.6 5.5 0.8V8H2z" fill="#2e6e44"/><rect x="2" y="7.5" width="10" height="1.5" fill="#5a88c0"/></svg></div>
</div>
<div id="expb"></div>
</div>
<div id="cmd">
<div id="cmdtitle">
<div class="a" style="left:8px;top:8px"><svg width="16" height="13" viewBox="0 0 16 13" ><rect x="0.5" y="0.5" width="15" height="12" fill="#000" stroke="#a8a8a8" stroke-width="1"/><rect x="1" y="1" width="14" height="2" fill="#d4d8e0"/><rect x="10" y="1.5" width="1" height="1" fill="#5a78a8"/><rect x="12" y="1.5" width="1" height="1" fill="#5a78a8"/><rect x="14" y="1.5" width="1" height="1" fill="#5a78a8"/><g fill="#fff"><rect x="3" y="5" width="2" height="1"/><rect x="2" y="6" width="1" height="3"/><rect x="3" y="9" width="2" height="1"/><rect x="5" y="6" width="1" height="1"/><rect x="5" y="8" width="1" height="1"/><rect x="7" y="6" width="1" height="1"/><rect x="7" y="8" width="1" height="1"/><rect x="9" y="5" width="1" height="2"/><rect x="10" y="7" width="1" height="3"/><rect x="12" y="9" width="3" height="1"/></g></svg></div>
<span class="t">C:\Windows\system32\cmd.exe</span>
<div class="a" style="left:858px;top:14px"><svg width="10" height="1" viewBox="0 0 10 1" ><rect x="0" y="0" width="10" height="1" fill="#fff"/></svg></div>
<div class="a" style="left:903px;top:9px"><svg width="10" height="10" viewBox="0 0 10 10" ><rect x="0.5" y="0.5" width="9" height="9" fill="none" stroke="#fff" stroke-width="1"/></svg></div>
<div class="a" style="left:949px;top:9px"><svg width="11" height="11" viewBox="0 0 11 11" ><path d="M0.5 0.5l10 10M10.5 0.5l-10 10" stroke="#fff" stroke-width="1.05"/></svg></div>
</div>
<div id="con">Could not reserve enough space for 2097152KB object heap
Error occurred during initialization of VM
Could not reserve enough space for 2097152KB object heap
Error occurred during initialization of VM
Could not reserve enough space for 2097152KB object heap
Error occurred during initialization of VM
Could not reserve enough space for 2097152KB object heap
Error occurred during initialization of VM
Could not reserve enough space for 2097152KB object heap
Error occurred during initialization of VM
Could not reserve enough space for 2097152KB object heap
Error occurred during initialization of VM
Could not reserve enough space for 2097152KB object heap
Error occurred during initialization of VM
Could not reserve enough space for 2097152KB object heap
Error occurred during initialization of VM
Could not reserve enough space for 2097152KB object heap
Error occurred during initialization of VM
Could not reserve enough space for 2097152KB object heap
Error occurred during initialization of VM
Could not reserve enough space for 2097152KB object heap
Error occurred during initialization of VM
Could not reserve enough space for 2097152KB object heap
Error occurred during initialization of VM
Could not reserve enough space for 2097152KB object heap
Error occurred during initialization of VM
Could not reserve enough space for 2097152KB object heap
Error occurred during initialization of VM
Could not reserve enough space for 2097152KB object heap</div>
<div id="cur"></div>
<div id="vsb"><div class="a" style="left:5px;top:6px"><svg width="8" height="7" viewBox="0 0 8 7" ><path d="M0.8 6l3.2-4l3.2 4" fill="none" stroke="#808080" stroke-width="1.9"/></svg></div><div class="a" style="left:1px;top:17px;width:15px;height:17px;background:#4d4d4d"></div><div class="a" style="left:5px;top:469px"><svg width="8" height="7" viewBox="0 0 8 7" ><path d="M0.8 1l3.2 4l3.2-4" fill="none" stroke="#808080" stroke-width="1.9"/></svg></div></div>
<div id="cmdb"></div>
</div>
<div class="a" style="left:0;top:1022px;width:1280px;height:2px;background:#0c2846"></div>
<div class="a" style="left:0;top:1022px;width:48px;height:2px;background:#1a3646"></div>
<div class="a" style="left:48px;top:1022px;width:342px;height:2px;background:#38342f"></div>
<div class="a" style="left:390px;top:1022px;width:250px;height:2px;background:#103a52"></div>
<div class="a" style="left:640px;top:1022px;width:46px;height:2px;background:#3a4a58"></div>
</body></html>
